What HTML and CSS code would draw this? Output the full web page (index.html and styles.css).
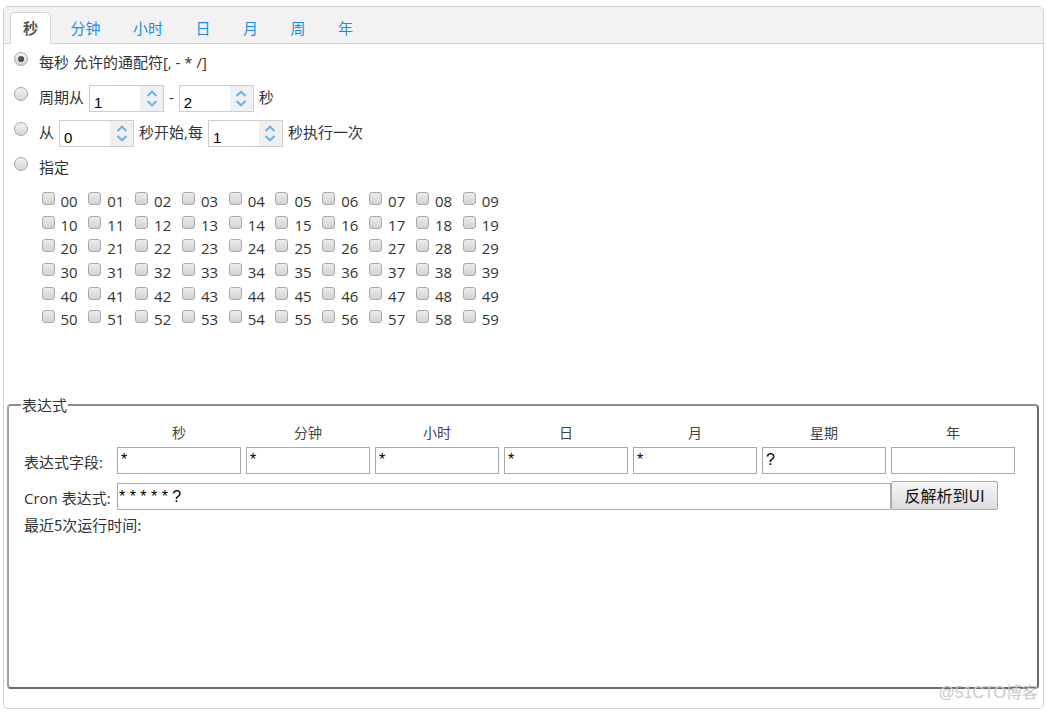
FILE: index.html
```html
<!DOCTYPE html>
<html lang="zh-CN">
<head>
<meta charset="utf-8">
<title>Cron</title>
<link rel="stylesheet" href="styles.css">
</head>
<body>
<div class="panel">
  <div class="tabs">
    <div class="tab active">秒</div>
    <div class="tab">分钟</div>
    <div class="tab">小时</div>
    <div class="tab">日</div>
    <div class="tab">月</div>
    <div class="tab">周</div>
    <div class="tab">年</div>
  </div>
  <div class="tab-body">
    <div class="opt">
      <span class="radio checked"></span>
      <span>每秒 允许的通配符[, - * /]</span>
    </div>
    <div class="opt">
      <span class="radio"></span>
      <span>周期从</span>
      <span class="spinner"><span class="sp-val">1</span><span class="sp-btns"><svg width="12" height="7" viewBox="0 0 12 7"><path d="M1.5 6 L6 1.8 L10.5 6" fill="none" stroke="#6cb4ee" stroke-width="2.2"/></svg><svg width="12" height="7" viewBox="0 0 12 7"><path d="M1.5 1 L6 5.2 L10.5 1" fill="none" stroke="#6cb4ee" stroke-width="2.2"/></svg></span></span>
      <span>-</span>
      <span class="spinner"><span class="sp-val">2</span><span class="sp-btns"><svg width="12" height="7" viewBox="0 0 12 7"><path d="M1.5 6 L6 1.8 L10.5 6" fill="none" stroke="#6cb4ee" stroke-width="2.2"/></svg><svg width="12" height="7" viewBox="0 0 12 7"><path d="M1.5 1 L6 5.2 L10.5 1" fill="none" stroke="#6cb4ee" stroke-width="2.2"/></svg></span></span>
      <span>秒</span>
    </div>
    <div class="opt">
      <span class="radio"></span>
      <span>从</span>
      <span class="spinner"><span class="sp-val">0</span><span class="sp-btns"><svg width="12" height="7" viewBox="0 0 12 7"><path d="M1.5 6 L6 1.8 L10.5 6" fill="none" stroke="#6cb4ee" stroke-width="2.2"/></svg><svg width="12" height="7" viewBox="0 0 12 7"><path d="M1.5 1 L6 5.2 L10.5 1" fill="none" stroke="#6cb4ee" stroke-width="2.2"/></svg></span></span>
      <span>秒开始,每</span>
      <span class="spinner"><span class="sp-val">1</span><span class="sp-btns"><svg width="12" height="7" viewBox="0 0 12 7"><path d="M1.5 6 L6 1.8 L10.5 6" fill="none" stroke="#6cb4ee" stroke-width="2.2"/></svg><svg width="12" height="7" viewBox="0 0 12 7"><path d="M1.5 1 L6 5.2 L10.5 1" fill="none" stroke="#6cb4ee" stroke-width="2.2"/></svg></span></span>
      <span>秒执行一次</span>
    </div>
    <div class="opt">
      <span class="radio"></span>
      <span>指定</span>
    </div>
    <div class="checks">
      <label class="ck"><span class="box"></span>00</label><label class="ck"><span class="box"></span>01</label><label class="ck"><span class="box"></span>02</label><label class="ck"><span class="box"></span>03</label><label class="ck"><span class="box"></span>04</label><label class="ck"><span class="box"></span>05</label><label class="ck"><span class="box"></span>06</label><label class="ck"><span class="box"></span>07</label><label class="ck"><span class="box"></span>08</label><label class="ck"><span class="box"></span>09</label>
      <label class="ck"><span class="box"></span>10</label><label class="ck"><span class="box"></span>11</label><label class="ck"><span class="box"></span>12</label><label class="ck"><span class="box"></span>13</label><label class="ck"><span class="box"></span>14</label><label class="ck"><span class="box"></span>15</label><label class="ck"><span class="box"></span>16</label><label class="ck"><span class="box"></span>17</label><label class="ck"><span class="box"></span>18</label><label class="ck"><span class="box"></span>19</label>
      <label class="ck"><span class="box"></span>20</label><label class="ck"><span class="box"></span>21</label><label class="ck"><span class="box"></span>22</label><label class="ck"><span class="box"></span>23</label><label class="ck"><span class="box"></span>24</label><label class="ck"><span class="box"></span>25</label><label class="ck"><span class="box"></span>26</label><label class="ck"><span class="box"></span>27</label><label class="ck"><span class="box"></span>28</label><label class="ck"><span class="box"></span>29</label>
      <label class="ck"><span class="box"></span>30</label><label class="ck"><span class="box"></span>31</label><label class="ck"><span class="box"></span>32</label><label class="ck"><span class="box"></span>33</label><label class="ck"><span class="box"></span>34</label><label class="ck"><span class="box"></span>35</label><label class="ck"><span class="box"></span>36</label><label class="ck"><span class="box"></span>37</label><label class="ck"><span class="box"></span>38</label><label class="ck"><span class="box"></span>39</label>
      <label class="ck"><span class="box"></span>40</label><label class="ck"><span class="box"></span>41</label><label class="ck"><span class="box"></span>42</label><label class="ck"><span class="box"></span>43</label><label class="ck"><span class="box"></span>44</label><label class="ck"><span class="box"></span>45</label><label class="ck"><span class="box"></span>46</label><label class="ck"><span class="box"></span>47</label><label class="ck"><span class="box"></span>48</label><label class="ck"><span class="box"></span>49</label>
      <label class="ck"><span class="box"></span>50</label><label class="ck"><span class="box"></span>51</label><label class="ck"><span class="box"></span>52</label><label class="ck"><span class="box"></span>53</label><label class="ck"><span class="box"></span>54</label><label class="ck"><span class="box"></span>55</label><label class="ck"><span class="box"></span>56</label><label class="ck"><span class="box"></span>57</label><label class="ck"><span class="box"></span>58</label><label class="ck"><span class="box"></span>59</label>
    </div>
  </div>
  <fieldset class="expr">
    <legend>表达式</legend>
    <div class="expr-grid">
      <span></span>
      <span class="col-h">秒</span>
      <span class="col-h">分钟</span>
      <span class="col-h">小时</span>
      <span class="col-h">日</span>
      <span class="col-h">月</span>
      <span class="col-h">星期</span>
      <span class="col-h">年</span>
      <span class="row-l">表达式字段:</span>
      <span class="field">*</span>
      <span class="field">*</span>
      <span class="field">*</span>
      <span class="field">*</span>
      <span class="field">*</span>
      <span class="field">?</span>
      <span class="field"></span>
    </div>
    <div class="cron-row">
      <span class="cron-l">Cron 表达式:</span>
      <span class="cron-input">* * * * * ?</span>
      <span class="btn">反解析到UI</span>
    </div>
    <div class="recent">最近5次运行时间:</div>
  </fieldset>
  <div class="watermark">@51CTO博客</div>
</div>
</body>
</html>
```

FILE: styles.css
```css
* { box-sizing: border-box; }
html, body { margin: 0; padding: 0; background: #fff; }
body {
  font-family: "Open Sans", "Noto Sans CJK SC", sans-serif;
  font-size: 15px;
  color: #333;
}
.panel {
  position: relative;
  width: 1041px;
  height: 703px;
  margin: 6px 0 0 3px;
  border: 1px solid #cfcfcf;
  border-radius: 5px;
  overflow: hidden;
}
.tabs {
  display: flex;
  align-items: flex-end;
  gap: 6.5px;
  height: 37px;
  padding: 0 6px;
  background: #f2f2f2;
  border-bottom: 1px solid #d4d4d4;
}
.tab {
  height: 32px;
  margin-bottom: -1px;
  padding: 0 12px;
  border: 1px solid transparent;
  border-bottom: 0;
  border-radius: 5px 5px 0 0;
  line-height: 30px;
  font-size: 15px;
  color: #1a8ee0;
  font-family: "Noto Sans CJK SC", sans-serif;
}
.tab.active {
  background: #fff;
  border-color: #d4d4d4;
  color: #575757;
  font-weight: bold;
}
.tab-body {
  height: 352px;
  padding: 0 0 0 10px;
}
.opt {
  display: flex;
  align-items: center;
  gap: 4px;
  height: 35px;
  white-space: nowrap;
}
.radio {
  width: 14px;
  height: 14px;
  margin: -6px 7px 0 0;
  border: 1px solid #a4a4a4;
  border-radius: 50%;
  background: linear-gradient(#f4f4f4, #d4d4d4);
  position: relative;
  flex: none;
}
.radio.checked::after {
  content: "";
  position: absolute;
  left: 3px;
  top: 3px;
  width: 6px;
  height: 6px;
  border-radius: 50%;
  background: radial-gradient(circle at 40% 40%, #666, #2a2a2a);
}
.spinner {
  display: inline-flex;
  width: 75px;
  height: 27px;
  margin: 4px 1px 0;
  border: 1px solid #cdcdcd;
  background: #fff;
  flex: none;
}
.sp-val {
  flex: 1;
  padding: 8px 0 0 4px;
  font-family: "Liberation Sans", Arial, sans-serif;
  font-size: 15px;
  color: #000;
  line-height: 17px;
}
.sp-btns {
  width: 23px;
  background: #f0f0f0;
  display: flex;
  flex-direction: column;
  align-items: center;
  justify-content: center;
  gap: 3px;
}
.sp-btns svg { display: block; }
.checks {
  display: grid;
  grid-template-columns: repeat(10, 46.8px);
  grid-auto-rows: 23.7px;
  margin: 5px 0 0 27.5px;
}
.ck {
  display: flex;
  align-items: center;
  font-family: "Open Sans", sans-serif;
  font-size: 15px;
  color: #333;
}
.box {
  width: 13px;
  height: 13px;
  margin: -5px 6px 0 0;
  border: 1px solid #a9a9a9;
  border-radius: 3px;
  background: linear-gradient(#ececec, #d2d2d2);
  flex: none;
}
.expr {
  width: 1032px;
  height: 293px;
  margin: 0 0 0 3px;
  padding: 0 15px;
  border: 2px solid;
  border-color: #8c8c8c #6a6a6a #6a6a6a #a0a0a0;
  border-radius: 4px;
  min-width: 0;
}
.expr legend {
  margin-left: -3px;
  padding: 0 1px;
  font-family: "Noto Sans CJK SC", sans-serif;
  font-size: 15px;
  line-height: 18px;
  color: #333;
}
.expr-grid {
  display: grid;
  grid-template-columns: 88px repeat(7, 124px);
  grid-template-rows: 28px 27px;
  column-gap: 5px;
  row-gap: 1px;
  margin-top: 4px;
}
.col-h {
  padding-top: 4px;
  text-align: center;
  font-family: "Noto Sans CJK SC", sans-serif;
  font-size: 14px;
  line-height: 20px;
  color: #444;
}
.row-l {
  display: flex;
  align-items: center;
  padding-top: 2px;
  white-space: nowrap;
}
.field {
  height: 27px;
  border: 1px solid #a9a9a9;
  padding: 2px 0 0 3px;
  font-family: "Liberation Sans", Arial, sans-serif;
  font-size: 16px;
  line-height: 20px;
  color: #000;
}
.cron-row {
  display: flex;
  align-items: center;
  margin-top: 7px;
  height: 29px;
}
.cron-l {
  width: 93px;
  white-space: nowrap;
  padding-top: 3px;
}
.cron-input {
  width: 774px;
  height: 27px;
  margin-top: 1px;
  border: 1px solid #a9a9a9;
  padding: 3px 0 0 1px;
  font-family: "Liberation Sans", Arial, sans-serif;
  font-size: 16px;
  line-height: 20px;
  color: #000;
  white-space: pre;
}
.btn {
  width: 107px;
  height: 29px;
  border: 1px solid #acacac;
  border-radius: 2px;
  background: linear-gradient(#f5f5f5, #dcdcdc);
  text-align: center;
  font-family: "Noto Sans CJK SC", sans-serif;
  font-size: 16px;
  line-height: 27px;
  color: #111;
}
.recent {
  margin-top: 5px;
  line-height: 20px;
  font-family: "Noto Sans CJK SC", sans-serif;
}
.watermark {
  position: absolute;
  right: 5px;
  bottom: 5px;
  font-family: "Liberation Sans", "Noto Sans CJK SC", sans-serif;
  font-size: 16px;
  color: #c9c9c9;
}
```
